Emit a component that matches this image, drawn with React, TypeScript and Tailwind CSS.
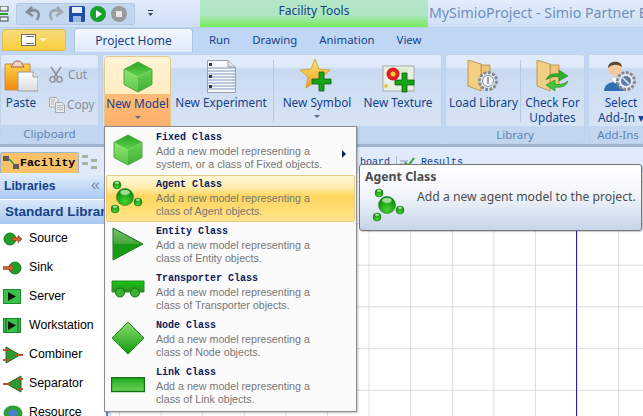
import type { ReactNode } from "react";

const uiFont = "font-['Noto_Sans','Liberation_Sans',sans-serif]";
const arialFont = "font-['Liberation_Sans',sans-serif]";
const monoFont = "font-['Liberation_Mono',monospace]";

function Grad({ id, from, to }: { id: string; from: string; to: string }) {
  return (
    <linearGradient id={id} x1="0" y1="0" x2="0" y2="1">
      <stop offset="0" stopColor={from} />
      <stop offset="1" stopColor={to} />
    </linearGradient>
  );
}

function CubeIcon({ size = 34 }: { size?: number }) {
  return (
    <svg width={size} height={size} viewBox="0 0 34 34">
      <defs>
        <Grad id="cubeTop" from="#2aa326" to="#63d24c" />
        <Grad id="cubeLeft" from="#8ee470" to="#5cc648" />
        <Grad id="cubeRight" from="#6ad454" to="#3fae36" />
      </defs>
      <path d="M17 2 L31 9.5 L17 17 L3 9.5 Z" fill="url(#cubeTop)" />
      <path d="M3 9.5 L17 17 L17 32 L3 24.5 Z" fill="url(#cubeLeft)" />
      <path d="M31 9.5 L17 17 L17 32 L31 24.5 Z" fill="url(#cubeRight)" />
      <path d="M17 2 L31 9.5 L31 24.5 L17 32 L3 24.5 L3 9.5 Z" fill="none" stroke="#4aa83e" strokeWidth="1" />
    </svg>
  );
}

function Ball({ cx, cy, r }: { cx: number; cy: number; r: number }) {
  return (
    <g>
      <circle cx={cx} cy={cy} r={r} fill="url(#ballFill)" stroke="#167d16" strokeWidth="0.6" />
      <ellipse cx={cx} cy={cy - r * 0.55} rx={r * 0.55} ry={r * 0.3} fill="#bdf0b0" opacity="0.8" />
    </g>
  );
}

function AgentIcon() {
  return (
    <svg width="34" height="34" viewBox="0 0 34 34">
      <defs>
        <radialGradient id="ballFill" cx="0.5" cy="0.75" r="0.75">
          <stop offset="0" stopColor="#47d62f" />
          <stop offset="1" stopColor="#0a7a0a" />
        </radialGradient>
      </defs>
      <Ball cx={6} cy={5} r={4} />
      <Ball cx={14} cy={17} r={8.5} />
      <Ball cx={27} cy={22} r={4} />
      <Ball cx={4} cy={29} r={4} />
    </svg>
  );
}

function TriangleIcon() {
  return (
    <svg width="34" height="34" viewBox="0 0 34 34">
      <defs>
        <Grad id="triFill" from="#7ac46b" to="#0b8a0b" />
      </defs>
      <path d="M2 1 L32 17 L2 33 Z" fill="url(#triFill)" stroke="#1b6b1b" strokeWidth="1" strokeLinejoin="round" />
      <path d="M2 17 L32 17 L2 33 Z" fill="#159a12" />
    </svg>
  );
}

function TransporterIcon() {
  return (
    <svg className="mb-[4px]" width="34" height="18" viewBox="0 0 34 18">
      <defs>
        <Grad id="carFill" from="#14c812" to="#2e8a24" />
      </defs>
      <path d="M1 1 H33 V12 H1 Z" fill="url(#carFill)" stroke="#2b8a26" strokeWidth="1" />
      <circle cx="9" cy="12.5" r="4.5" fill="#35b52c" stroke="#186f18" />
      <circle cx="24" cy="12.5" r="4.5" fill="#35b52c" stroke="#186f18" />
    </svg>
  );
}

function DiamondIcon() {
  return (
    <svg width="34" height="34" viewBox="0 0 34 34">
      <defs>
        <Grad id="diaFill" from="#8adf6f" to="#0f9a0f" />
      </defs>
      <path d="M17 1 L33 17 L17 33 L1 17 Z" fill="url(#diaFill)" stroke="#1f8a1f" strokeWidth="1" />
    </svg>
  );
}

function LinkIcon() {
  return (
    <svg width="34" height="16" viewBox="0 0 34 16">
      <defs>
        <Grad id="linkFill" from="#1ca81a" to="#6fd45a" />
      </defs>
      <rect x="0.5" y="0.5" width="33" height="14" fill="url(#linkFill)" stroke="#156f15" strokeWidth="1.4" />
    </svg>
  );
}

function PasteIcon() {
  return (
    <svg width="34" height="34" viewBox="0 0 34 34">
      <defs>
        <Grad id="clipFill" from="#ffd24a" to="#f08a10" />
        <Grad id="pageFill" from="#ffffff" to="#d8dce2" />
      </defs>
      <path d="M1 5 H26 V31 H1 Z" fill="url(#clipFill)" stroke="#c98a45" />
      <path d="M9 5 C9 1 18 1 18 5 L20 8 H7 Z" fill="#eed6c0" stroke="#b5574f" />
      <path d="M14 13 H29 L34 18 V32 H14 Z" fill="url(#pageFill)" stroke="#9a9a9a" />
      <path d="M29 13 V18 H34" fill="#e8eaee" stroke="#9a9a9a" />
    </svg>
  );
}

function ScissorsIcon() {
  return (
    <svg width="14" height="17" viewBox="0 0 14 17" fill="none" stroke="#8b8f96">
      <path d="M2 1 L9 11 M12 1 L5 11" strokeWidth="1.4" />
      <circle cx="3.6" cy="13.5" r="2.6" strokeWidth="1.4" />
      <circle cx="10.4" cy="13.5" r="2.6" strokeWidth="1.4" />
    </svg>
  );
}

function CopyIcon() {
  return (
    <svg width="16" height="16" viewBox="0 0 16 16" fill="#e6e8ea" stroke="#a7a9ab">
      <path d="M0.5 0.5 H7 L9 2.5 V10 H0.5 Z" />
      <path d="M6.5 5.5 H13 L15.5 8 V15.5 H6.5 Z" />
      <path d="M8 8.5 H14 M8 10.5 H14 M8 12.5 H14 M2 3 H6 M2 5 H5 M2 7 H5" strokeWidth="0.8" />
    </svg>
  );
}

function NotebookIcon() {
  return (
    <svg width="29" height="33" viewBox="0 0 29 33">
      <path d="M0.5 0.5 H21 L28.5 7 V32.5 H0.5 Z" fill="#f6f8fc" stroke="#9ba0a8" />
      <path d="M21 0.5 V7 H28.5" fill="#dfe3ea" stroke="#9ba0a8" />
      {[8, 11, 14, 17, 20, 23, 26, 29].map((y) => (
        <path key={y} d="M1 0 H28" transform={`translate(0 ${y})`} stroke="#5f7fb5" strokeWidth="0.8" />
      ))}
      <rect x="2" y="3" width="3" height="3" fill="#33363c" />
      <rect x="2" y="15" width="3" height="3" fill="#33363c" />
      <rect x="2" y="25" width="3" height="3" fill="#33363c" />
    </svg>
  );
}

function GreenPlus({ x, y }: { x: number; y: number }) {
  return (
    <path
      transform={`translate(${x} ${y})`}
      d="M7 0 H12 V7 H19 V12 H12 V19 H7 V12 H0 V7 H7 Z"
      fill="#16a316"
      stroke="#0e5f12"
      strokeWidth="0.8"
    />
  );
}

function StarPlusIcon() {
  return (
    <svg width="34" height="34" viewBox="0 0 34 34">
      <defs>
        <Grad id="starFill" from="#ffe27a" to="#e9a21a" />
      </defs>
      <path
        d="M15 0 L19 10 L30 11 L22 18 L24 29 L15 23 L6 29 L8 18 L0 11 L11 10 Z"
        fill="url(#starFill)"
        stroke="#cf9a2e"
        strokeWidth="0.8"
      />
      <GreenPlus x={12} y={13} />
    </svg>
  );
}

function TexturePlusIcon() {
  return (
    <svg width="33" height="28" viewBox="0 0 33 28">
      <rect x="1" y="1" width="31" height="25" fill="#e9efe4" stroke="#a8a8a8" />
      <rect x="14" y="3" width="12" height="8" fill="#d9ead0" />
      <circle cx="11" cy="9" r="6.5" fill="#e02020" />
      <circle cx="11" cy="9" r="2.5" fill="#ffcf30" />
      <circle cx="4" cy="21" r="2" fill="#e6c94a" />
      <GreenPlus x={13} y={8} />
    </svg>
  );
}

function FolderShape() {
  return (
    <g>
      <path d="M14 5 H23 V25 H14 Z" fill="#eec67a" stroke="#b58b3e" strokeWidth="0.8" />
      <path d="M1 0 L14 4 V31 L1 26 Z" fill="#f3cf86" stroke="#b58b3e" strokeWidth="0.8" />
    </g>
  );
}

function FolderGearIcon() {
  return (
    <svg width="33" height="33" viewBox="0 0 33 33">
      <FolderShape />
      <circle cx="21" cy="21" r="8.5" fill="#e7ebef" stroke="#858b92" strokeWidth="3" strokeDasharray="3 1.4" />
      <circle cx="21" cy="21" r="5.5" fill="#f5f6f8" stroke="#8a9097" />
      <path d="M21 17 V24" stroke="#7d848c" strokeWidth="1.5" />
    </svg>
  );
}

function FolderArrowsIcon() {
  return (
    <svg width="33" height="33" viewBox="0 0 33 33">
      <FolderShape />
      <path d="M10 20 C12 14 18 13 23 14 V10 L32 16 L23 21 V17 C18 16 14 17 10 20 Z" fill="#2fae2c" stroke="#147a17" strokeWidth="0.5" />
      <path d="M32 21 C30 27 24 28 19 27 V31 L10 25 L19 20 V24 C24 25 28 24 32 21 Z" fill="#47c23c" stroke="#147a17" strokeWidth="0.5" />
    </svg>
  );
}

function UserGearIcon() {
  return (
    <svg width="34" height="33" viewBox="0 0 34 33">
      <circle cx="11" cy="9" r="7" fill="#f3c9a0" />
      <path d="M4 8 C4 0 18 0 18 7 C14 4 8 4 4 8 Z" fill="#5a4534" />
      <path d="M0 31 C0 19 22 19 22 31 Z" fill="#2f6fb0" />
      <path d="M8 18 L11 24 L14 18 Z" fill="#fff" />
      <circle cx="22" cy="21" r="8.5" fill="#e7ebef" stroke="#858b92" strokeWidth="3" strokeDasharray="3 1.4" />
      <circle cx="22" cy="21" r="5" fill="#5e7ea8" />
      <path d="M19 18 L25 24" stroke="#e7ebef" strokeWidth="1.5" />
    </svg>
  );
}

function RibbonButton({
  icon,
  lines,
  arrow,
  width,
  active
}: {
  icon: ReactNode;
  lines: string[];
  arrow?: boolean;
  width: string;
  active?: boolean;
}) {
  return (
    <div
      className={`flex shrink-0 flex-col items-center ${width} ${active ? "rounded-sm border border-[#e6c98e] bg-[linear-gradient(#fff3d6,#ffe9b0)]" : ""}`}
    >
      <div className="flex h-[37px] items-end justify-center">{icon}</div>
      <div
        className={`flex h-[33px] w-full flex-col items-center pt-[2px] text-[11.8px] leading-[15px] text-[#15428b] ${active ? "bg-[linear-gradient(#ffbb78,#fbb06a)]" : ""}`}
      >
        {lines.map((line) => (
          <span key={line} className="whitespace-nowrap">
            {line}
          </span>
        ))}
        {arrow ? <span className="mt-[5px] h-0 w-0 border-x-[3px] border-t-[3px] border-x-transparent border-t-[#5a6a80]" /> : null}
      </div>
    </div>
  );
}

function RibbonGroup({ label, width, children }: { label?: string; width: string; children: ReactNode }) {
  return (
    <div
      className={`flex h-[90px] shrink-0 flex-col overflow-hidden rounded-[3px] border border-[#bfd2ea] bg-[linear-gradient(#dfeafa_0,#dfeafa_12px,#c9daf0_14px,#dbe7f7_100%)] ${width}`}
    >
      <div className="flex h-[71px] items-start pl-[1px] pt-[1px]">{children}</div>
      <div className="h-[18px] whitespace-nowrap bg-[#c2d6ef] text-center text-[11.5px] leading-[18px] text-[#5d84b8]">{label}</div>
    </div>
  );
}

const menuItems = [
  { icon: <CubeIcon />, title: "Fixed Class", lines: ["Add a new model representing a", "system, or a class of Fixed objects."], more: true },
  { icon: <AgentIcon />, title: "Agent Class", lines: ["Add a new model representing a", "class of Agent objects."], active: true },
  { icon: <TriangleIcon />, title: "Entity Class", lines: ["Add a new model representing a", "class of Entity objects."] },
  { icon: <TransporterIcon />, title: "Transporter Class", lines: ["Add a new model representing a", "class of Transporter objects."] },
  { icon: <DiamondIcon />, title: "Node Class", lines: ["Add a new model representing a", "class of Node objects."] },
  { icon: <LinkIcon />, title: "Link Class", lines: ["Add a new model representing a", "class of Link objects."] }
];

function NewModelMenu() {
  return (
    <div className="absolute left-[104px] top-[126px] z-10 flex h-[286px] w-[253px] flex-col border border-[#8d8d8d] bg-[#fbfbfb] pt-[1px] shadow-[1px_1px_2px_rgba(0,0,0,0.25)]">
      {menuItems.map((item) => (
        <div
          key={item.title}
          className={`relative mx-[1px] flex h-[47px] shrink-0 items-center rounded-[2px] border ${item.active ? "border-[#e3c98b] bg-[linear-gradient(#fff7d8_0,#ffeeb0_25%,#ffd65c_45%,#ffe48a_100%)]" : "border-transparent"}`}
        >
          <div className="flex w-[49px] shrink-0 justify-start pb-[4px] pl-[4px]">{item.icon}</div>
          <div className="pb-[1px]">
            <div className={`${monoFont} text-[10px] font-bold leading-[14px] text-[#0b1b5c]`}>{item.title}</div>
            <div className={`${arialFont} text-[10.7px] leading-[13px] text-[#777]`}>{item.lines[0]}</div>
            <div className={`${arialFont} text-[10.7px] leading-[13px] text-[#777]`}>{item.lines[1]}</div>
          </div>
          {item.more ? (
            <span className="absolute right-[8px] top-[21px] h-0 w-0 border-y-[4px] border-l-[4px] border-y-transparent border-l-[#15206b]" />
          ) : null}
        </div>
      ))}
    </div>
  );
}

function AgentTooltip() {
  return (
    <div className="absolute left-[359px] top-[164px] z-20 h-[67px] w-[283px] rounded-[3px] border border-[#767676] bg-[linear-gradient(#ffffff,#f2f6fb_45%,#c5d4e9)] pl-[5px] pt-[3px] shadow-[1px_1px_1px_rgba(0,0,0,0.2)]">
      <div className="text-[12.3px] font-bold leading-[18px] text-[#4c4c4c]">Agent Class</div>
      <div className="mt-[2px] flex items-start">
        <div className="ml-[8px] w-[44px] shrink-0">
          <AgentIcon />
        </div>
        <span className="whitespace-nowrap pt-[1px] text-[12.2px] leading-[16px] text-[#4c4c4c]">Add a new agent model to the project.</span>
      </div>
    </div>
  );
}

function ObjectGlyph({ kind }: { kind: string }) {
  if (kind === "Source" || kind === "Sink") {
    const flip = kind === "Sink";
    return (
      <svg width="20" height="14" viewBox="0 0 20 14">
        <circle cx={flip ? 12 : 7} cy="7" r="6" fill="#1f9f2a" stroke="#157a1f" />
        <path d={flip ? "M0 5.5 H7 V3 L11 7 L7 11 V8.5 H0 Z" : "M9 5.5 H15 V3 L19 7 L15 11 V8.5 H9 Z"} fill="#c9622d" stroke="#7a3a18" strokeWidth="0.5" />
      </svg>
    );
  }
  if (kind === "Server" || kind === "Workstation") {
    return (
      <svg width="18" height="15" viewBox="0 0 18 15">
        <rect x="0.5" y="0.5" width="17" height="14" fill="#39c24a" stroke="#1f8a2a" />
        {kind === "Workstation" ? <path d="M3 1 V14 M15 1 V14" stroke="#14611e" /> : null}
        <path d="M5 3 L13 7.5 L5 12 Z" fill="#0c1a0c" />
      </svg>
    );
  }
  if (kind === "Combiner" || kind === "Separator") {
    const flip = kind === "Separator";
    return (
      <svg width="20" height="18" viewBox="0 0 20 18">
        <path d={flip ? "M18 1 V17 L4 9 Z" : "M3 1 V17 L17 9 Z"} fill="#2d9a33" stroke="#1c6f22" />
        <path d="M0 4 H6 M0 14 H6 M12 9 H20" stroke="#b5562a" strokeWidth="2" transform={flip ? "matrix(-1 0 0 1 20 0)" : undefined} />
      </svg>
    );
  }
  return (
    <svg width="20" height="16" viewBox="0 0 20 16">
      <ellipse cx="10" cy="8" rx="9.5" ry="7.5" fill="#2d9e3a" />
      <ellipse cx="10" cy="8" rx="5" ry="3" fill="#4a7fd0" />
    </svg>
  );
}

const libraryObjects = ["Source", "Sink", "Server", "Workstation", "Combiner", "Separator", "Resource"];

function LibrariesPanel() {
  return (
    <aside className={`${arialFont} w-[105px] shrink-0 overflow-hidden bg-white`}>
      <div className="flex h-[26px] items-center justify-between bg-[linear-gradient(#e3eefc,#a9c8f0)] pl-[4px] pr-[3px] text-[12.2px] font-bold text-[#15428b]">
        Libraries
        <span className="mr-[2px] pb-[2px] text-[16px] font-normal text-[#6b8bb5]">«</span>
      </div>
      <div className="mt-[1px] flex h-[24px] items-center whitespace-nowrap bg-[linear-gradient(#dbe9fb,#a9c8f0)] pl-[5px] text-[13.5px] font-bold text-[#15428b]">
        Standard Library
      </div>
      <div>
        {libraryObjects.map((name) => (
          <div key={name} className="flex h-[29px] items-center text-[12.3px] text-black">
            <div className="flex w-[29px] shrink-0 justify-start pl-[3px]">
              <ObjectGlyph kind={name} />
            </div>
            {name}
          </div>
        ))}
      </div>
    </aside>
  );
}

export default function App() {
  return (
    <div className={`relative flex h-[416px] w-[643px] flex-col overflow-hidden bg-[#bfd7f5] ${uiFont}`}>
      {/* title row */}
      <div className="flex h-[27px] shrink-0 bg-[linear-gradient(#e2ecfb,#cfe0f7)]">
        <div className="flex w-[200px] shrink-0 items-center">
          <svg className="shrink-0" width="9" height="16" viewBox="0 0 9 16">
            <rect x="0" y="0" width="8" height="5" fill="#e8eefa" stroke="#3c4a3c" />
            <path d="M0 8 H8" stroke="#2d9a33" strokeWidth="2" />
            <rect x="0" y="11" width="8" height="4" fill="#e8eefa" stroke="#3c4a3c" />
          </svg>
          <div className="ml-[7px] flex h-[22px] w-[119px] items-center gap-[5px] rounded-[2px] border border-[#b5c9e6] bg-[#c3d6f0] pl-[8px]">
            <svg width="17" height="17" viewBox="0 0 17 17" fill="none" stroke="#858c96" strokeWidth="2.6">
              <path d="M7 2 L2 7 L8 11 M3 7 C10 3 17 6 12 15" />
            </svg>
            <svg width="17" height="17" viewBox="0 0 17 17" fill="none" stroke="#a3a8af" strokeWidth="2.6">
              <path d="M10 2 L15 7 L9 11 M14 7 C7 3 0 6 5 15" />
            </svg>
            <svg width="16" height="16" viewBox="0 0 16 16">
              <rect width="16" height="16" rx="1.5" fill="#1e4fa8" />
              <rect x="3" y="1" width="10" height="6" fill="#e8eefa" />
              <rect x="4" y="10" width="8" height="6" fill="#9fb7de" />
            </svg>
            <svg width="16" height="16" viewBox="0 0 16 16">
              <circle cx="8" cy="8" r="8" fill="#17a32a" />
              <path d="M6 4 L12 8 L6 12 Z" fill="#fff" />
            </svg>
            <svg width="16" height="16" viewBox="0 0 16 16">
              <circle cx="8" cy="8" r="8" fill="#9a9a9a" />
              <rect x="5" y="5" width="6" height="6" fill="#e8e8e8" />
            </svg>
          </div>
          <svg className="ml-[13px]" width="7" height="7" viewBox="0 0 7 7" fill="#30435f">
            <rect y="0" width="5" height="1" />
            <path d="M0 3 H5 L2.5 6 Z" />
          </svg>
        </div>
        <div className="flex w-[228px] shrink-0 justify-center bg-[linear-gradient(#b5e6c9_0,#aee6c2_55%,#72ec58_100%)] pt-[2px] text-[12px] leading-[17px] text-[#15428b]">
          Facility Tools
        </div>
        <div className="whitespace-nowrap pl-[1px] pt-[3px] text-[14.2px] leading-[20px] text-[#6f8fb9]">MySimioProject - Simio Partner Ed</div>
      </div>

      {/* tab row */}
      <div className="flex h-[25px] shrink-0 items-end border-t border-[#bcd0ea]">
        <div className="mb-[1px] ml-[2px] flex h-[22px] w-[64px] items-center justify-center gap-[3px] rounded-t-[4px] border border-[#e0bd5c] bg-[linear-gradient(#f7da7c,#fbcf3c)]">
          <span className="flex h-[12px] w-[15px] border border-[#6d6d6d] bg-white">
            <span className="ml-[4px] mt-[1px] h-[8px] w-[8px] border-y border-[#6d6d6d]" />
          </span>
          <span className="h-0 w-0 border-x-[4px] border-t-[4px] border-x-transparent border-t-[#fff2b8]" />
        </div>
        <div className="ml-[8px] flex h-[24px] w-[119px] items-center justify-center rounded-t-[4px] border border-b-0 border-[#a9c5e6] bg-[linear-gradient(#f3f8fe,#dfeafa)] text-[12px] text-[#15428b]">
          Project Home
        </div>
        <div className="ml-[16px] flex h-[24px] w-[227px] items-center text-[11.4px] text-[#15428b]">
          <span>Run</span>
          <span className="ml-[22px]">Drawing</span>
          <span className="ml-[22px]">Animation</span>
          <span className="ml-[22px]">View</span>
        </div>
      </div>

      {/* ribbon */}
      <div className="flex h-[95px] shrink-0 gap-[3px] border-b-[3px] border-[#9fb3cd] bg-[#bfd7f5] pt-[2px]">
        <RibbonGroup label="Clipboard" width="w-[99px]">
          <div className="flex w-[38px] shrink-0 flex-col items-center">
            <div className="flex h-[37px] items-end">
              <PasteIcon />
            </div>
            <span className="pt-[2px] text-[11.8px] leading-[15px] text-[#15428b]">Paste</span>
          </div>
          <div className="flex flex-col gap-[11px] pl-[9px] pt-[9px] text-[11.8px] leading-[19px] text-[#8b8f96]">
            <div className="flex items-center gap-[5px]">
              <ScissorsIcon />
              Cut
            </div>
            <div className="flex items-center gap-[2px]">
              <CopyIcon />
              Copy
            </div>
          </div>
        </RibbonGroup>
        <RibbonGroup label="" width="w-[340px]">
          <RibbonButton icon={<CubeIcon />} lines={["New Model"]} arrow width="w-[67px]" active />
          <RibbonButton icon={<NotebookIcon />} lines={["New Experiment"]} width="w-[100px]" />
          <span className="mx-[2px] mt-[4px] h-[62px] w-px shrink-0 bg-[#b7c9e0]" />
          <RibbonButton icon={<StarPlusIcon />} lines={["New Symbol"]} arrow width="w-[82px]" />
          <RibbonButton icon={<TexturePlusIcon />} lines={["New Texture"]} width="w-[80px]" />
        </RibbonGroup>
        <RibbonGroup label="Library" width="w-[140px]">
          <RibbonButton icon={<FolderGearIcon />} lines={["Load Library"]} width="w-[73px]" />
          <span className="mt-[4px] h-[62px] w-px shrink-0 bg-[#b7c9e0]" />
          <RibbonButton icon={<FolderArrowsIcon />} lines={["Check For", "Updates"]} width="w-[63px]" />
        </RibbonGroup>
        <RibbonGroup label="Add-Ins" width="w-[60px]">
          <RibbonButton icon={<UserGearIcon />} lines={["Select", "Add-In ▾"]} width="w-[62px]" />
        </RibbonGroup>
      </div>

      {/* document tabs */}
      <div className="flex h-[26px] shrink-0 items-end bg-[#dfeafa]">
        <div className={`${monoFont} flex h-[21px] w-[79px] shrink-0 items-center gap-[1px] rounded-t-[3px] border border-b-0 border-[#9fb3cd] bg-[#fbc26a] pl-[2px] text-[11.5px] font-bold text-black`}>
          <svg className="shrink-0" width="16" height="14" viewBox="0 0 16 14">
            <rect x="0" y="0" width="6" height="5" fill="#5c5c5c" />
            <rect x="10" y="8" width="6" height="5" fill="#5c5c5c" />
            <path d="M6 3 L11 8" stroke="#2d9a33" strokeWidth="1.5" />
          </svg>
          Facility
        </div>
        <svg className="mb-[3px] ml-[3px] shrink-0" width="16" height="16" viewBox="0 0 16 16" fill="#a9b1a2">
          <rect x="0" y="1" width="6" height="3" />
          <rect x="9" y="5" width="6" height="3" />
          <rect x="0" y="8" width="6" height="3" />
          <rect x="9" y="12" width="6" height="3" />
        </svg>
        <div className={`${monoFont} mb-[3px] ml-[262px] flex shrink-0 items-center whitespace-nowrap text-[10px] text-[#15428b]`}>
          board
          <span className="ml-[6px] h-[14px] w-px bg-[#a9bcd5]" />
          <svg className="ml-[3px]" width="16" height="12" viewBox="0 0 16 12" fill="none">
            <path d="M0 4 H8 M0 7 H8 M0 10 H8" stroke="#8aa2c0" />
            <path d="M5 5 L8 9 L14 1" stroke="#3aa02f" strokeWidth="2" />
          </svg>
          <span className="ml-[5px]">Results</span>
        </div>
      </div>

      {/* workspace */}
      <div className="flex min-h-0 flex-1">
        <LibrariesPanel />
        <main className="flex min-w-0 flex-1 bg-white bg-[linear-gradient(to_right,#dcdcdc_1px,transparent_1px),linear-gradient(to_bottom,#dcdcdc_1px,transparent_1px)] bg-[size:41.6px_41.7px] bg-[position:14px_50px]">
          <div className="ml-px h-full w-[5px] shrink-0 border-l-2 border-[#5d8fe0] bg-[#d6e4f8]" />
          <div className="ml-[465px] h-full w-px bg-[#1c22a0]" />
        </main>
      </div>

      <NewModelMenu />
      <AgentTooltip />
    </div>
  );
}
